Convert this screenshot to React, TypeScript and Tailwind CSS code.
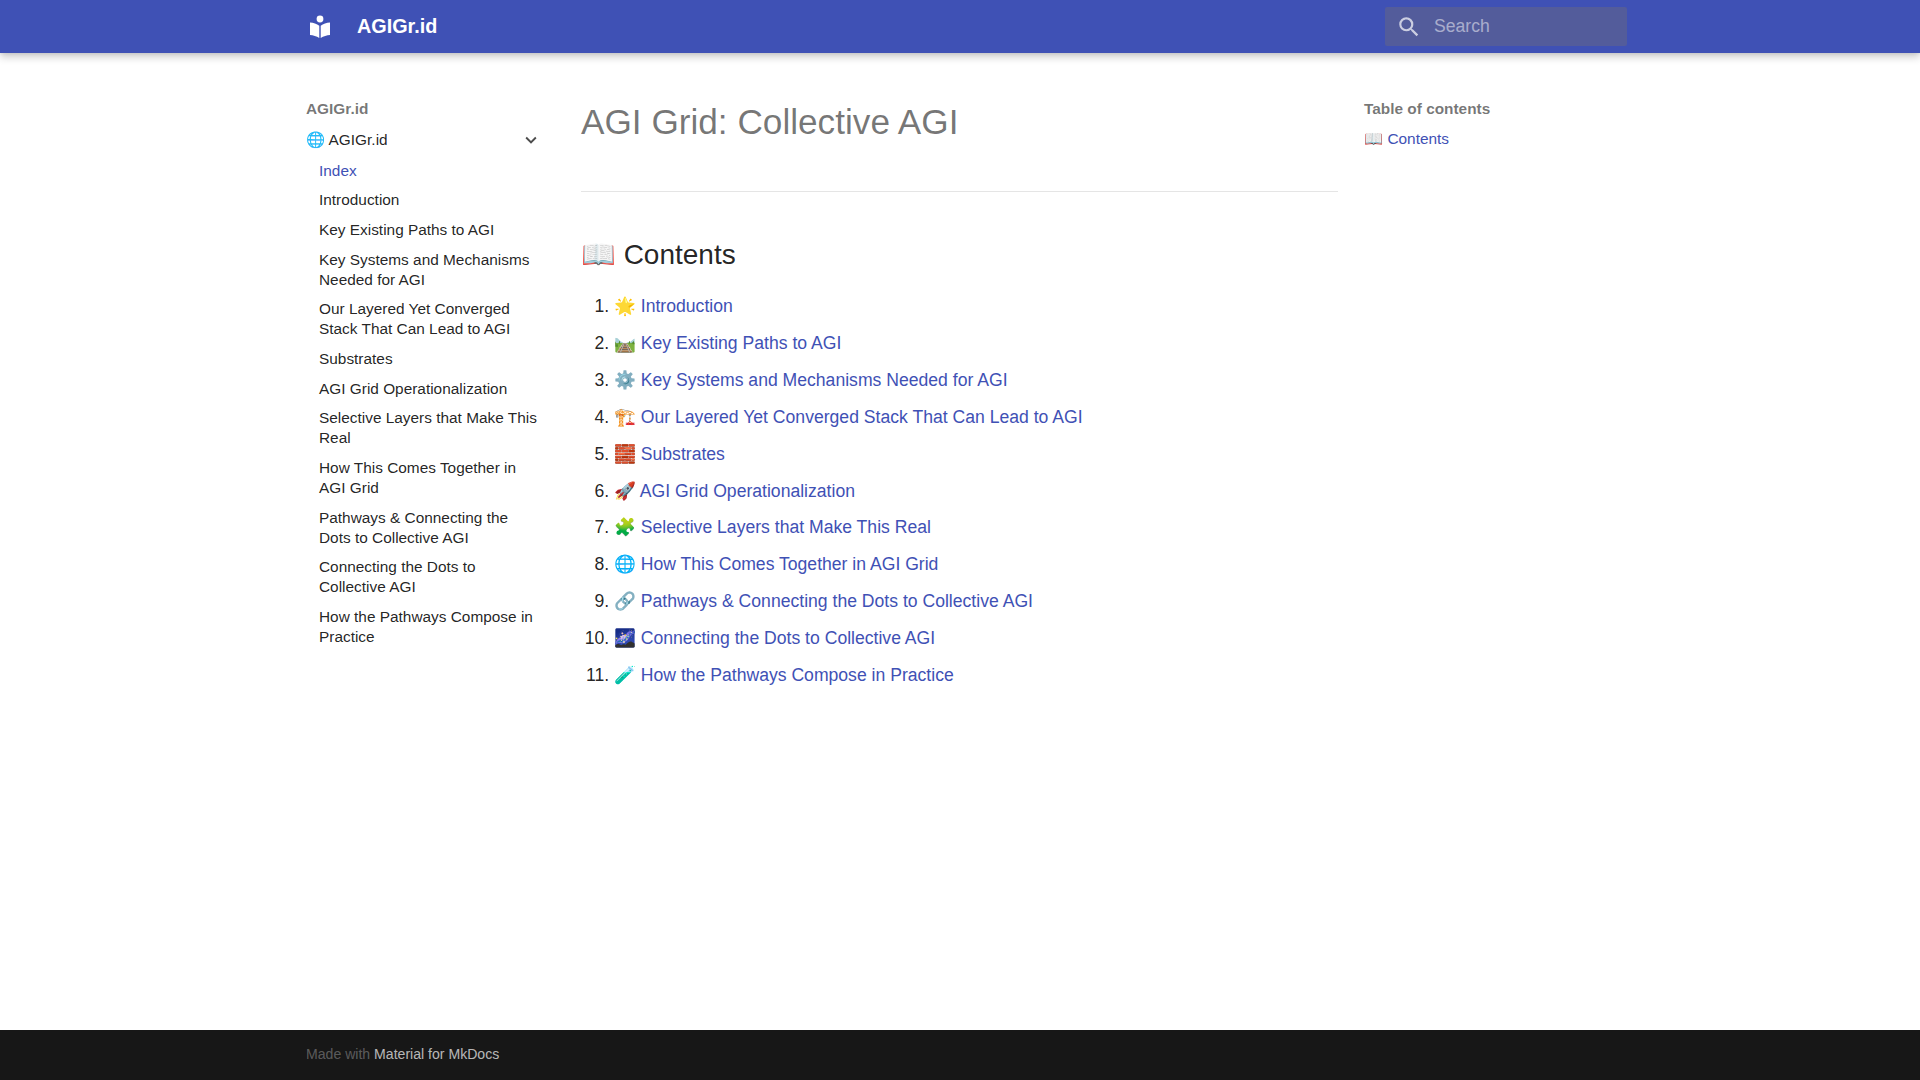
import React from "react";

const navItems = [
  "Introduction",
  "Key Existing Paths to AGI",
  "Key Systems and Mechanisms Needed for AGI",
  "Our Layered Yet Converged Stack That Can Lead to AGI",
  "Substrates",
  "AGI Grid Operationalization",
  "Selective Layers that Make This Real",
  "How This Comes Together in AGI Grid",
  "Pathways & Connecting the Dots to Collective AGI",
  "Connecting the Dots to Collective AGI",
  "How the Pathways Compose in Practice",
];

const contents = [
  ["🌟", "Introduction"],
  ["🛤️", "Key Existing Paths to AGI"],
  ["⚙️", "Key Systems and Mechanisms Needed for AGI"],
  ["🏗️", "Our Layered Yet Converged Stack That Can Lead to AGI"],
  ["🧱", "Substrates"],
  ["🚀", "AGI Grid Operationalization"],
  ["🧩", "Selective Layers that Make This Real"],
  ["🌐", "How This Comes Together in AGI Grid"],
  ["🔗", "Pathways & Connecting the Dots to Collective AGI"],
  ["🌌", "Connecting the Dots to Collective AGI"],
  ["🧪", "How the Pathways Compose in Practice"],
];

const Logo = () => (
  <svg viewBox="0 0 20 23" className="w-[20px] h-[23px] fill-white">
    <circle cx="10" cy="4" r="3.4" />
    <path d="M0 7.6c3.4.3 6.8 1.4 9.3 3.2V23C6.5 21.3 3.2 20.4 0 20.1V7.6z" />
    <path d="M20 7.6c-3.4.3-6.8 1.4-9.3 3.2V23c2.8-1.7 6.1-2.6 9.3-2.9V7.6z" />
  </svg>
);

const App = () => {
  return (
    <div className="min-h-screen flex flex-col bg-white font-['Liberation_Sans','Noto_Color_Emoji',sans-serif]">
      <header className="h-[53px] shrink-0 bg-[#3f51b5] text-white shadow-[0_0_4px_rgba(0,0,0,0.1),0_4px_8px_rgba(0,0,0,0.2)] z-10">
        <div className="w-[1342px] mx-auto h-full flex items-center">
          <div className="ml-[21px] w-[20px] flex justify-center">
            <Logo />
          </div>
          <div className="ml-[27px] text-[19.8px] font-bold">AGIGr.id</div>
          <div className="ml-auto mr-[4px] w-[242px] h-[39.6px] rounded-[2px] bg-[#535c9b] flex items-center">
            <svg viewBox="0 0 24 24" className="ml-[11px] w-[26px] h-[26px] fill-white/70">
              <path d="M9.5 3A6.5 6.5 0 0 1 16 9.5c0 1.61-.59 3.09-1.56 4.23l.27.27h.79l5 5-1.5 1.5-5-5v-.79l-.27-.27A6.516 6.516 0 0 1 9.5 16 6.5 6.5 0 0 1 3 9.5 6.5 6.5 0 0 1 9.5 3m0 2C7 5 5 7 5 9.5S7 14 9.5 14 14 12 14 9.5 12 5 9.5 5z" />
            </svg>
            <span className="ml-[12px] text-[17.6px] text-white/50">Search</span>
          </div>
        </div>
      </header>

      <main className="flex-1 w-[1342px] mx-auto flex items-start">
        {/* left nav */}
        <nav className="w-[266px] shrink-0 pl-[17px] pr-[14px] pt-[46px] text-[15.4px] leading-[20px] text-black/87">
          <div className="font-bold text-black/55">AGIGr.id</div>
          <div className="mt-[10px] flex items-center justify-between">
            <span>🌐 AGIGr.id</span>
            <svg viewBox="0 0 24 24" className="w-[22px] h-[22px] fill-black/70 mr-[-1px]">
              <path d="M7.41 8.58 12 13.17l4.59-4.59L18 10l-6 6-6-6 1.41-1.42z" />
            </svg>
          </div>
          <ul className="pl-[13px] pr-[2px]">
            <li className="mt-[9.6px] text-[#3f51b5]">Index</li>
            {navItems.map((item) => (
              <li key={item} className="mt-[9.7px]">
                {item}
              </li>
            ))}
          </ul>
        </nav>

        {/* page content */}
        <article className="w-[757px] shrink-0 mx-[26px] pt-[46px] text-[17.6px] leading-[28.16px] text-black/87">
          <h1 className="text-[35.2px] leading-[45.76px] font-light text-black/55">AGI Grid: Collective AGI</h1>
          <hr className="mt-[46px] border-black/10" />
          <h2 className="mt-[43px] text-[28px] leading-[40px]">📖 Contents</h2>
          <ol className="mt-[17px] ml-[33px] list-decimal">
            {contents.map(([emoji, title], i) => (
              <li key={title} className={i === 0 ? "" : "mt-[8.8px]"}>
                <span className="text-[#3f51b5]">
                  {emoji} {title}
                </span>
              </li>
            ))}
          </ol>
        </article>

        {/* toc */}
        <aside className="w-[249px] shrink-0 pl-[0px] pt-[46px] text-[15.4px] leading-[20px]">
          <div className="font-bold text-black/55">Table of contents</div>
          <div className="mt-[10px] text-[#3f51b5]">📖 Contents</div>
        </aside>
      </main>

      <footer className="h-[50px] shrink-0 bg-[#171717] text-[14.08px]">
        <div className="w-[1342px] mx-auto h-full flex items-center pl-[17px]">
          <span className="text-white/30">Made with&nbsp;</span>
          <span className="text-white/70">Material for MkDocs</span>
        </div>
      </footer>
    </div>
  );
};

export default App;
